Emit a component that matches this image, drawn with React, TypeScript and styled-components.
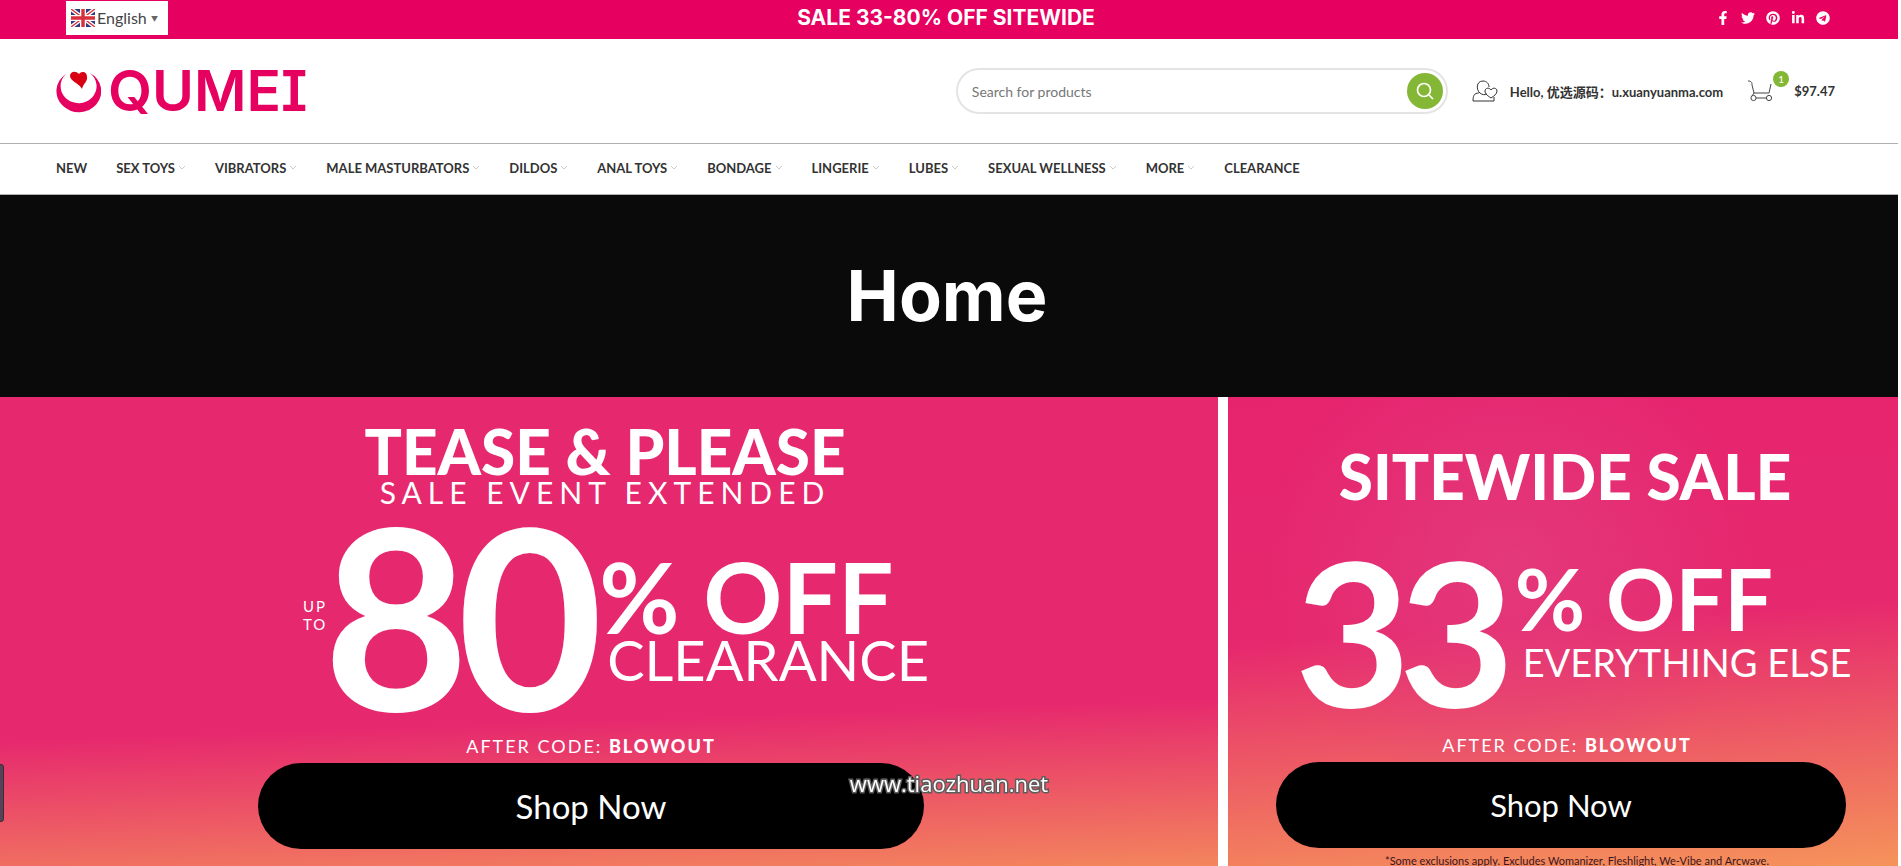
import React from "react";
import styled, { createGlobalStyle } from "styled-components";
import { FaFacebookF, FaTwitter, FaPinterest, FaLinkedinIn, FaTelegram } from "react-icons/fa";

const Global = createGlobalStyle`
  *, *::before, *::after { box-sizing: border-box; }
  body {
    margin: 0;
    background: #fff;
    color: #333;
    font-family: Lato, "Noto Sans CJK SC", sans-serif;
  }
  a { color: inherit; text-decoration: none; }
  h1, h2, p, ul { margin: 0; padding: 0; }
  button, input, select { font: inherit; color: inherit; }
`;

const Page = styled.div`
  min-height: 100vh;
  padding-right: 3px;
  display: flex;
  flex-direction: column;
`;

const TopBar = styled.div`
  height: 39px;
  padding: 0 68px 4px 66px;
  display: grid;
  grid-template-columns: 1fr auto 1fr;
  align-items: center;
  background: #e6005f;
  color: #fff;
`;

const Language = styled.label`
  justify-self: start;
  width: 102px;
  height: 34px;
  padding: 0 5px;
  display: flex;
  align-items: center;
  gap: 2px;
  background: #fff;
  color: #444;
  select {
    width: 52px;
    padding: 0;
    border: 0;
    appearance: none;
    background: none;
    font-size: 16px;
  }
  svg { flex: none; }
  small { font-size: 7px; color: #666; }
`;

const Promo = styled.p`
  padding-right: 4px;
  font: 700 21px/30px Inter, sans-serif;
`;

const Socials = styled.nav`
  justify-self: end;
  display: flex;
  gap: 11px;
  a { display: flex; width: 14px; justify-content: center; font-size: 14px; }
`;

const Header = styled.header`
  height: 105px;
  padding: 0 63px 0 56px;
  display: flex;
  align-items: center;
  border-bottom: 1px solid #b0b0b0;
`;

const Brand = styled.a`
  display: flex;
  align-items: center;
  gap: 7px;
  color: #e6005f;
  margin-right: auto;
  font: 600 57px/50px Inter, sans-serif;
  font-feature-settings: "cv08";
`;

const SearchForm = styled.form`
  width: 492px;
  height: 46px;
  margin-right: 24px;
  padding: 0 3px 0 14px;
  display: flex;
  align-items: center;
  border: 2px solid #e4e4e4;
  border-radius: 23px;
  input {
    flex: 1;
    min-width: 0;
    border: 0;
    padding: 0;
    outline: 0;
    background: none;
    font-size: 14px;
  }
  input::placeholder { color: #777; opacity: 1; }
  button {
    width: 36px;
    height: 36px;
    padding: 0;
    border: 0;
    border-radius: 50%;
    display: grid;
    place-items: center;
    background: #84b735;
    color: #fff;
  }
`;

const HeaderLink = styled.a<{ $gap: number }>`
  display: flex;
  align-items: center;
  gap: ${(p) => p.$gap}px;
  font-size: 13px;
  font-weight: 700;
  & + & { margin-left: 24px; }
`;

const CartIcon = styled.span`
  position: relative;
  display: flex;
  b {
    position: absolute;
    left: 26px;
    top: -9px;
    width: 16px;
    height: 16px;
    border-radius: 50%;
    background: #84b735;
    color: #fff;
    font: 400 10px/16px Lato, sans-serif;
    text-align: center;
  }
`;

const MainNav = styled.nav`
  height: 51px;
  padding: 0 56px 2px;
  display: flex;
  align-items: center;
  gap: 29px;
  border-bottom: 1px solid #b0b0b0;
`;

const NavLink = styled.a`
  display: flex;
  align-items: center;
  gap: 3px;
  font-size: 13px;
  font-weight: 700;
  text-transform: uppercase;
  white-space: nowrap;
  svg { color: #ccc; }
`;

const Hero = styled.section`
  height: 202px;
  display: grid;
  place-items: center;
  background: #0a0a0a;
  color: #fff;
  h1 { padding-right: 4px; font: 700 70px/80px Inter, sans-serif; }
`;

const Banners = styled.main`
  flex: 1;
  display: grid;
  grid-template-columns: 1218fr 670fr;
  gap: 10px;
`;

const Banner = styled.section<{ $wide?: boolean }>`
  display: flex;
  flex-direction: column;
  align-items: center;
  overflow: hidden;
  padding: ${(p) => (p.$wide ? "26px 36px 0 0" : "51px 4px 0 0")};
  color: #fff;
  white-space: nowrap;
  background: ${(p) =>
    p.$wide
      ? "linear-gradient(178deg, #e6286e 0%, #e6286e 67%, #f5935a 105%)"
      : "radial-gradient(circle at 42% 36%, rgba(226,64,128,.7), rgba(226,64,128,0) 50%), linear-gradient(176deg, #e6246e 0%, #e6286e 48%, #f5935a 100%)"};
`;

const Headline = styled.div<{ $wide?: boolean }>`
  padding-left: ${(p) => (p.$wide ? 28 : 8)}px;
  text-align: center;
`;

const BannerTitle = styled.h2`
  font-size: 62px;
  line-height: 56px;
  font-weight: 900;
`;

const Subtitle = styled.p`
  font-size: 30px;
  line-height: 26px;
  letter-spacing: 6px;
`;

const Offer = styled.div<{ $wide?: boolean }>`
  display: flex;
  align-items: center;
  height: 224px;
  padding-left: ${(p) => (p.$wide ? 50 : 24)}px;
`;

const UpTo = styled.p`
  width: 20px;
  padding-bottom: 4px;
  font-size: 15px;
  line-height: 18px;
  letter-spacing: 2px;
  white-space: normal;
`;

const Figure = styled.strong<{ $wide?: boolean }>`
  padding: ${(p) => (p.$wide ? "0 8px 6px 0" : "28px 12px 0 0")};
  font-size: ${(p) => (p.$wide ? 252 : 200)}px;
  line-height: 200px;
  letter-spacing: -12px;
`;

const OfferText = styled.div<{ $wide?: boolean }>`
  padding-top: ${(p) => (p.$wide ? 6 : 12)}px;
`;

const Percent = styled.p<{ $wide?: boolean }>`
  font-size: ${(p) => (p.$wide ? 98 : 86)}px;
  line-height: 80px;
  font-weight: 700;
`;

const Scope = styled.p<{ $wide?: boolean }>`
  padding-left: 8px;
  font-size: ${(p) => (p.$wide ? 56 : 38)}px;
  line-height: 48px;
`;

const Code = styled.p<{ $wide?: boolean }>`
  padding-left: ${(p) => (p.$wide ? 0 : 12)}px;
  font-size: 18px;
  line-height: 34px;
  letter-spacing: 2px;
  b { font-weight: 900; }
`;

const ShopButton = styled.button<{ $wide?: boolean }>`
  width: ${(p) => (p.$wide ? 666 : 570)}px;
  height: 86px;
  flex: none;
  border: 0;
  border-radius: 43px;
  background: #000;
  color: #fff;
  font-size: ${(p) => (p.$wide ? 33 : 31)}px;
`;

const Footnote = styled.p`
  height: 18px;
  padding: 4px 0 0 32px;
  font-size: 11px;
  line-height: 18px;
  color: #3c1420;
`;

const SideTab = styled.button`
  position: fixed;
  left: -8px;
  top: 764px;
  width: 12px;
  height: 58px;
  padding: 0;
  border: 1px solid #333;
  border-radius: 3px;
  background: #5a4058;
`;

const Watermark = styled.span`
  position: fixed;
  left: 0;
  right: 3px;
  top: 768px;
  text-align: center;
  font: 400 22px/30px "Open Sans", sans-serif;
  color: #fff;
  -webkit-text-stroke: 3px #5c5c5c;
  paint-order: stroke fill;
  pointer-events: none;
`;

const Flag = () => (
  <svg width="24" height="18" viewBox="0 0 24 18" aria-hidden="true">
    <rect width="24" height="18" fill="#2e3b80" />
    <path d="M0 0L24 18M24 0L0 18" stroke="#fff" strokeWidth="4" />
    <path d="M0 0L24 18M24 0L0 18" stroke="#d8303c" strokeWidth="1.4" />
    <path d="M12 0V18M0 9H24" stroke="#fff" strokeWidth="6" />
    <path d="M12 0V18M0 9H24" stroke="#d8303c" strokeWidth="3.4" />
  </svg>
);

const LogoMark = () => (
  <svg width="45" height="43" viewBox="0 0 45 43" aria-hidden="true">
    <path d="M10 4A22.4 21 0 1 0 34 3A18 17 0 1 1 10 4Z" fill="#e6005f" />
    <path d="M26 19C24 14 14 11 14 6 14 2 19 0 23 4 25 1 31 1 31 7 32 11 27 14 26 19Z" fill="#d80012" />
  </svg>
);

const Chevron = () => (
  <svg width="8" height="6" viewBox="0 0 8 6" fill="none" stroke="currentColor" aria-hidden="true">
    <path d="M1 1L4 4L7 1" />
  </svg>
);

const UserIcon = () => (
  <svg width="26" height="22" viewBox="0 0 26 22" fill="none" stroke="#333" aria-hidden="true">
    <path d="M8 13C4 10 4 1 11 1 15 1 17 4 17 7M8 13C10 15 13 15 15 14M7 13C2 13 1 16 1 21H22V17" />
    <path d="M19 18C16 16 13 14 13 11 13 8 17 7 19 10 21 7 25 8 25 11 25 14 22 16 19 18Z" />
  </svg>
);

const Cart = () => (
  <svg width="27" height="22" viewBox="0 0 27 22" fill="none" stroke="#444" aria-hidden="true">
    <path d="M1 1C5 1 5 3 5 5L7 13H22L24 4M7 13L5 16M8 18H20" />
    <circle cx="6.500" cy="18" r="2.600" fill="#fff" />
    <circle cx="22" cy="18" r="2.600" fill="#fff" />
  </svg>
);

const links: [string, boolean][] = [
  ["New", false], ["Sex Toys", true], ["Vibrators", true], ["Male Masturbators", true],
  ["Dildos", true], ["Anal Toys", true], ["Bondage", true], ["Lingerie", true],
  ["Lubes", true], ["Sexual Wellness", true], ["More", true], ["Clearance", false],
];

const socials = [
  { name: "Facebook", Icon: FaFacebookF }, { name: "Twitter", Icon: FaTwitter },
  { name: "Pinterest", Icon: FaPinterest }, { name: "LinkedIn", Icon: FaLinkedinIn },
  { name: "Telegram", Icon: FaTelegram },
];

export default function App() {
  return (
    <Page>
      <Global />
      <TopBar>
        <Language>
          <Flag />
          <select aria-label="Language"><option>English</option></select>
          <small aria-hidden="true">▼</small>
        </Language>
        <Promo>SALE 33-80% OFF SITEWIDE</Promo>
        <Socials>
          {socials.map(({ name, Icon }) => (
            <a key={name} href="#" aria-label={name}><Icon /></a>
          ))}
        </Socials>
      </TopBar>
      <Header>
        <Brand href="#"><LogoMark />QUMEI</Brand>
        <SearchForm>
          <input aria-label="Search for products" placeholder="Search for products" />
          <button type="button" aria-label="Search">
            <svg width="18" height="18" viewBox="0 0 18 18" fill="none" stroke="currentColor" strokeWidth="1.7">
              <circle cx="8" cy="8" r="6.5" /><path d="M13 13L17 17" />
            </svg>
          </button>
        </SearchForm>
        <HeaderLink href="#" $gap={12}><UserIcon />Hello, 优选源码：u.xuanyuanma.com</HeaderLink>
        <HeaderLink href="#" $gap={20}><CartIcon><Cart /><b>1</b></CartIcon>$97.47</HeaderLink>
      </Header>
      <MainNav>
        {links.map(([label, menu]) => (
          <NavLink key={label} href="#">{label}{menu && <Chevron />}</NavLink>
        ))}
      </MainNav>
      <Hero><h1>Home</h1></Hero>
      <Banners>
        <Banner $wide>
          <Headline $wide>
            <BannerTitle>TEASE &amp; PLEASE</BannerTitle>
            <Subtitle>SALE EVENT EXTENDED</Subtitle>
          </Headline>
          <Offer $wide>
            <UpTo>UP TO</UpTo>
            <Figure $wide>80</Figure>
            <OfferText $wide>
              <Percent $wide>% OFF</Percent>
              <Scope $wide>CLEARANCE</Scope>
            </OfferText>
          </Offer>
          <Code $wide>AFTER CODE: <b>BLOWOUT</b></Code>
          <ShopButton $wide>Shop Now</ShopButton>
        </Banner>
        <Banner>
          <Headline><BannerTitle>SITEWIDE SALE</BannerTitle></Headline>
          <Offer>
            <Figure>33</Figure>
            <OfferText>
              <Percent>% OFF</Percent>
              <Scope>EVERYTHING ELSE</Scope>
            </OfferText>
          </Offer>
          <Code>AFTER CODE: <b>BLOWOUT</b></Code>
          <ShopButton>Shop Now</ShopButton>
          <Footnote>*Some exclusions apply. Excludes Womanizer, Fleshlight, We-Vibe and Arcwave.</Footnote>
        </Banner>
      </Banners>
      <SideTab aria-label="Open panel" />
      <Watermark>www.tiaozhuan.net</Watermark>
    </Page>
  );
}
